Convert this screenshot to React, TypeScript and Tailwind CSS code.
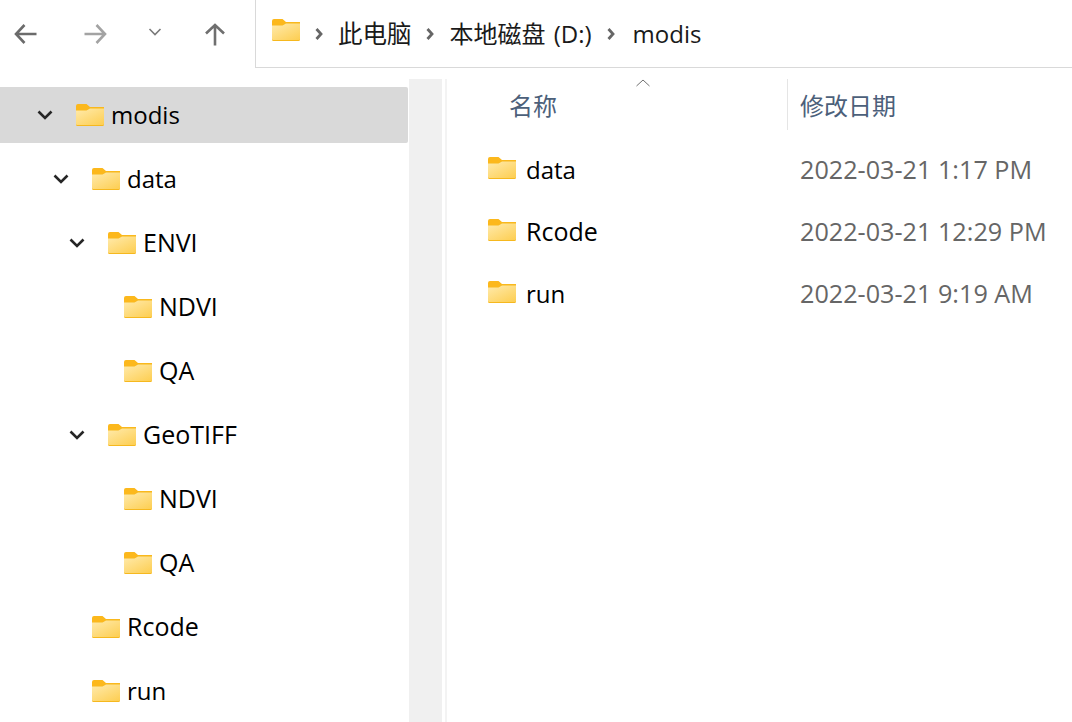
const FONT = "font-['Open_Sans','Noto_Sans_CJK_SC',sans-serif]";

function Folder() {
    return (
        <svg width="28" height="22" viewBox="0 0 28 22" className="shrink-0">
            <defs>
                <linearGradient id="folderBody" x1="0.1" y1="0" x2="0.9" y2="1">
                    <stop offset="0" stopColor="#ffe9a8" />
                    <stop offset="1" stopColor="#fdcf55" />
                </linearGradient>
            </defs>
            <path d="M0 2a2 2 0 0 1 2-2h8.500l3.500 3h14v5H0z" fill="#fcb81c" />
            <path d="M0 6h10.500L14 3.500h14V20.500a1.500 1.500 0 0 1-1.500 1.500h-25A1.500 1.500 0 0 1 0 20.500z" fill="#f6b81e" />
            <path d="M0 6.500h10.500L14 4.500h14V20a1 1 0 0 1-1 1H1a1 1 0 0 1-1-1z" fill="url(#folderBody)" />
        </svg>
    );
}

function BackArrow({ className, flip }: { className: string; flip?: boolean }) {
    return (
        <svg width="24" height="24" viewBox="0 0 24 24" fill="none" stroke="currentColor" strokeWidth="2.6" className={className + (flip ? " rotate-180" : "")}>
            <path d="M1.500 12h21M10.500 3 2 12l8.500 9" />
        </svg>
    );
}

function Sep() {
    return (
        <svg width="8" height="12" viewBox="0 0 8 12" fill="none" stroke="#666666" strokeWidth="2.800" className="shrink-0 mt-[3px]">
            <path d="M1.500 1 6 6l-4.500 5" />
        </svg>
    );
}

function Expander() {
    return (
        <svg width="16" height="10" viewBox="0 0 16 10" fill="none" stroke="#262626" strokeWidth="2.600">
            <path d="M1.500 1.500 8 8l6.500-6.500" />
        </svg>
    );
}

const tree = [
    { name: "modis", depth: 0, open: true, selected: true },
    { name: "data", depth: 1, open: true },
    { name: "ENVI", depth: 2, open: true, caps: true },
    { name: "NDVI", depth: 3, caps: true },
    { name: "QA", depth: 3, caps: true },
    { name: "GeoTIFF", depth: 2, open: true, caps: true },
    { name: "NDVI", depth: 3, caps: true },
    { name: "QA", depth: 3, caps: true },
    { name: "Rcode", depth: 1, caps: true },
    { name: "run", depth: 1 },
];

const indents = ["pl-[37px]", "pl-[53px]", "pl-[69px]", "pl-[85px]"];

const files = [
    { name: "data", date: "2022-03-21 1:17 PM" },
    { name: "Rcode", date: "2022-03-21 12:29 PM", caps: true },
    { name: "run", date: "2022-03-21 9:19 AM" },
];

export default function App() {
    return (
        <div className={"w-[1072px] h-[722px] overflow-hidden bg-white flex flex-col " + FONT}>
            <header className="h-[68px] flex shrink-0">
                <div className="w-[255px] shrink-0 flex items-center pb-[1px]">
                    <BackArrow className="ml-[14px] text-[#6b6b6b]" />
                    <BackArrow className="ml-[45px] text-[#a3a3a3]" flip />
                    <svg width="16" height="10" viewBox="0 0 16 10" fill="none" stroke="#7a7a7a" strokeWidth="1.600" className="ml-[40px] -mt-[3px]">
                        <path d="M2.500 2 8 7.500 13.500 2" />
                    </svg>
                    <BackArrow className="ml-[40px] text-[#6f6f6f] rotate-90 mt-[2px]" />
                </div>
                <div className="flex-1 flex items-center border-l border-b border-[#d9d9d9] pl-[16px] pb-[3px] text-[24px] text-[#1a1a1a] whitespace-nowrap">
                    <div className="-mt-[4px]"><Folder /></div>
                    <div className="ml-[15px]"><Sep /></div>
                    <span className="ml-[15px] pt-[4px] leading-none text-[24.5px]">此电脑</span>
                    <div className="ml-[14px]"><Sep /></div>
                    <span className="ml-[16px] pt-[4px] leading-none [word-spacing:2px]">本地磁盘 (D:)</span>
                    <div className="ml-[15px]"><Sep /></div>
                    <span className="ml-[18px] pt-[3px] leading-none">modis</span>
                </div>
            </header>
            <div className="flex flex-1 min-h-0">
                <nav className="w-[408px] pt-[19px] flex flex-col gap-[8px] shrink-0">
                    {tree.map((row, i) => (
                        <div key={i} className={"h-[56px] shrink-0 flex items-center rounded-r-[2px] " + indents[row.depth] + (row.selected ? " bg-[#d9d9d9]" : "")}>
                            <div className="w-[39px] shrink-0">
                                {row.open && <Expander />}
                            </div>
                            <Folder />
                            <span className={"ml-[7px] leading-none text-black " + (row.caps ? "text-[25px] pb-[2px]" : "text-[24px]")}>{row.name}</span>
                        </div>
                    ))}
                </nav>
                <div className="w-[33px] ml-[1px] mt-[11px] bg-[#f0f0f0] shrink-0" />
                <div className="w-[2px] ml-[3px] mt-[11px] bg-[#f3f3f3] shrink-0" />
                <main className="flex-1 min-w-0 mt-[11px]">
                    <div className="h-[51px] flex relative">
                        <svg width="14" height="8" viewBox="0 0 14 8" fill="none" stroke="#707070" strokeWidth="1" className="absolute left-[189px] top-0">
                            <path d="M0.500 7 7 1l6.500 6" />
                        </svg>
                        <div className="w-[341px] border-r border-[#e5e5e5] pl-[62px] flex items-center text-[24px] text-[#4c607a] shrink-0 pt-[3px]">名称</div>
                        <div className="pl-[12px] flex items-center text-[24px] text-[#4c607a] pt-[3px]">修改日期</div>
                    </div>
                    <div className="flex flex-col pt-[7px]">
                        {files.map((f) => (
                            <div key={f.name} className="h-[62px] flex items-center">
                                <div className="w-[341px] pl-[41px] flex items-center shrink-0">
                                    <Folder />
                                    <span className={"ml-[10px] leading-none text-black " + (f.caps ? "text-[25px] pt-[2px]" : "text-[24px] pt-[4px]")}>{f.name}</span>
                                </div>
                                <span className="pl-[12px] pt-[4px] text-[25.2px] leading-none text-[#666666] whitespace-nowrap">{f.date}</span>
                            </div>
                        ))}
                    </div>
                </main>
            </div>
        </div>
    );
}
